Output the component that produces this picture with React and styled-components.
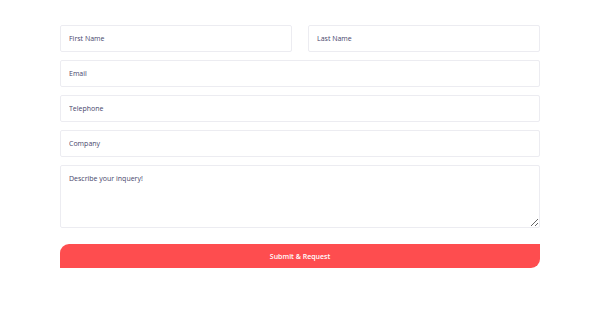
import React from "react";
import styled, { createGlobalStyle } from "styled-components";

const GlobalStyle = createGlobalStyle`
  body {
    margin: 0;
    background: #ffffff;
    font-family: "Open Sans", Lato, sans-serif;
  }
`;

const Page = styled.div`
  width: 600px;
  height: 320px;
  padding-top: 25px;
  box-sizing: border-box;
`;

const Form = styled.form`
  width: 480px;
  margin: 0 auto;
  display: flex;
  flex-direction: column;
  gap: 8.5px;
`;

const Row = styled.div`
  display: grid;
  grid-template-columns: 1fr 1fr;
  column-gap: 16px;
`;

const Field = styled.input`
  box-sizing: border-box;
  width: 100%;
  height: 26.5px;
  padding: 0 8px;
  border: 1px solid #ececf1;
  border-radius: 2px;
  background: #fff;
  font-family: inherit;
  font-size: 7px;
  color: #47466b;
  outline: none;
  &::placeholder {
    color: #47466b;
    opacity: 1;
  }
`;

const Area = styled.textarea`
  box-sizing: border-box;
  width: 100%;
  height: 63px;
  padding: 8px;
  border: 1px solid #ececf1;
  border-radius: 2px;
  font-family: inherit;
  font-size: 7px;
  color: #47466b;
  outline: none;
  resize: vertical;
  &::placeholder {
    color: #47466b;
    opacity: 1;
  }
`;

const Submit = styled.button`
  margin-top: 7.5px;
  height: 24px;
  border: none;
  border-radius: 9px 0 9px 0;
  background: #fe4d4f;
  color: #fff;
  font-family: inherit;
  font-size: 7px;
  font-weight: 600;
  cursor: pointer;
`;

export default function App() {
  return (
    <>
      <GlobalStyle />
      <Page>
        <Form onSubmit={(e) => e.preventDefault()}>
          <Row>
            <Field placeholder="First Name" />
            <Field placeholder="Last Name" />
          </Row>
          <Field placeholder="Email" />
          <Field placeholder="Telephone" />
          <Field placeholder="Company" />
          <Area placeholder="Describe your inquery!" />
          <Submit type="submit">Submit &amp; Request</Submit>
        </Form>
      </Page>
    </>
  );
}
